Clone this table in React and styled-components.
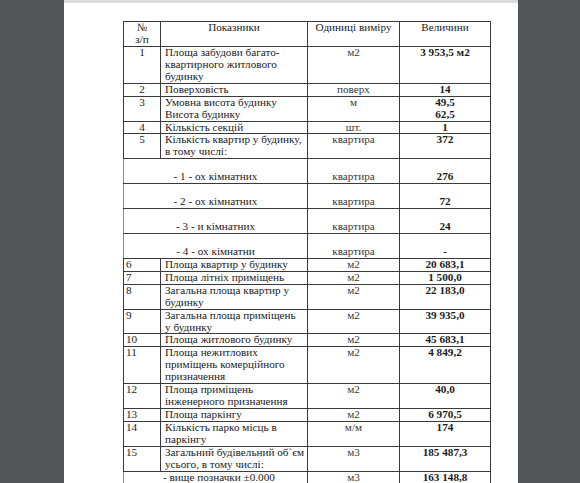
import React from 'react'
import styled, { createGlobalStyle } from 'styled-components'

const rows = [
  { n: '1', c: 'center', t: ['Площа забудови багато-', 'квартирного житлового', 'будинку'], u: 'м2', v: ['3 953,5 м2'] },
  { n: '2', c: 'center', t: ['Поверховість'], u: 'поверх', v: ['14'] },
  { n: '3', c: 'center', t: ['Умовна висота будинку', 'Висота будинку'], u: 'м', v: ['49,5', '62,5'] },
  { n: '4', c: 'center', t: ['Кількість секцій'], u: 'шт.', v: ['1'] },
  { n: '5', c: 'center', t: ['Кількість квартир у будинку,', 'в тому числі:'], u: 'квартира', v: ['372'] },
  { sub: '- 1 - ох кімнатних', u: 'квартира', v: ['276'] },
  { sub: '- 2 - ох кімнатних', u: 'квартира', v: ['72'] },
  { sub: '- 3 - и кімнатних', u: 'квартира', v: ['24'] },
  { sub: '- 4 - ох кімнатни', u: 'квартира', v: ['-'] },
  { n: '6', t: ['Площа квартир у будинку'], u: 'м2', v: ['20 683,1'] },
  { n: '7', t: ['Площа літніх приміщень'], u: 'м2', v: ['1 500,0'] },
  { n: '8', t: ['Загальна площа квартир у', 'будинку'], u: 'м2', v: ['22 183,0'] },
  { n: '9', t: ['Загальна площа приміщень', 'у будинку'], u: 'м2', v: ['39 935,0'] },
  { n: '10', t: ['Площа житлового будинку'], u: 'м2', v: ['45 683,1'] },
  { n: '11', t: ['Площа нежитлових', 'приміщень комерційного', 'призначення'], u: 'м2', v: ['4 849,2'] },
  { n: '12', t: ['Площа приміщень', 'інженерного призначення'], u: 'м2', v: ['40,0'] },
  { n: '13', t: ['Площа паркінгу'], u: 'м2', v: ['6 970,5'] },
  { n: '14', t: ['Кількість парко місць в', 'паркінгу'], u: 'м/м', v: ['174'] },
  { n: '15', t: ['Загальний будівельний об`єм', 'усього, в тому числі:'], u: 'м3', v: ['185 487,3'] },
  { sub: '- вище позначки ±0.000', left: true, u: 'м3', v: ['163 148,8'] },
]

const Lines = ({ items }) =>
  items.map((l, i) => (
    <Line key={i}>{l}</Line>
  ))

export default function App() {
  return (
    <>
      <Global />
      <Viewer>
        <Page>
          <Table>
            <colgroup>
              <col style={{ width: 37 }} />
              <col style={{ width: 147 }} />
              <col style={{ width: 92 }} />
              <col style={{ width: 91 }} />
            </colgroup>
            <thead>
              <tr>
                <Th><Line>№</Line><Line>з/п</Line></Th>
                <Th><Line>Показники</Line></Th>
                <Th><Line>Одиниці виміру</Line></Th>
                <Th><Line>Величини</Line></Th>
              </tr>
            </thead>
            <tbody>
              {rows.map((r, i) =>
                r.sub ? (
                  <tr key={i}>
                    <Td colSpan={2} $align={r.left ? 'left' : 'center'} $lead={!r.left} $indent={r.left} $soft>
                      <Line>{r.sub}</Line>
                    </Td>
                    <Td $align="center" $lead={!r.left} $unit><Line>{r.u}</Line></Td>
                    <Td $align="center" $lead={!r.left} $bold>
                      <Lines items={r.v} />
                    </Td>
                  </tr>
                ) : (
                  <tr key={i}>
                    <Td $align={r.c || 'left'}><Line>{r.n}</Line></Td>
                    <Td $text>
                      <Lines items={r.t} />
                    </Td>
                    <Td $align="center" $unit><Line>{r.u}</Line></Td>
                    <Td $align="center" $bold>
                      <Lines items={r.v} />
                    </Td>
                  </tr>
                )
              )}
            </tbody>
          </Table>
        </Page>
      </Viewer>
    </>
  )
}

// #region styles
const Global = createGlobalStyle`
  html, body {
    margin: 0;
    height: 483px;
    overflow: hidden;
    background: #525659;
  }
`

const Viewer = styled.div`
  height: 483px;
  display: flex;
  padding-left: 64px;
  box-sizing: border-box;
`

const Page = styled.div`
  width: 454px;
  height: 100%;
  background: #fff;
  border-top: 3px solid #dcdcdc;
  box-sizing: border-box;
  padding: 18px 0 0 59px;
  font-family: "Liberation Serif", "DejaVu Serif", serif;
  font-size: 11.2px;
  color: #1c1c1c;
`

const Table = styled.table`
  border-collapse: collapse;
  table-layout: fixed;
  width: 367px;
`

const Line = styled.div`
  height: 11.95px;
  line-height: 11.95px;
  white-space: nowrap;
`

const Th = styled.th`
  font-weight: normal;
  text-align: center;
  vertical-align: top;
  border: 1px solid #3a3a3a;
  padding: 0 2px;
  line-height: 11.95px;
`

const Td = styled.td`
  text-align: ${p => p.$align || 'left'};
  vertical-align: top;
  border: 1px solid #3a3a3a;
  border-left-color: ${p => (p.$soft ? '#8a8a8a' : '#3a3a3a')};
  padding: ${p => (p.$lead ? '11.95px' : '0')} ${p => (p.$text ? '4px' : '2px')} 0
    ${p => (p.$indent ? '39px' : p.$text ? '4px' : '2px')};
  font-weight: ${p => (p.$bold ? 'bold' : 'normal')};
  color: ${p => (p.$unit ? '#3a3a3a' : '#1c1c1c')};
  line-height: 11.95px;
`
// #endregion
